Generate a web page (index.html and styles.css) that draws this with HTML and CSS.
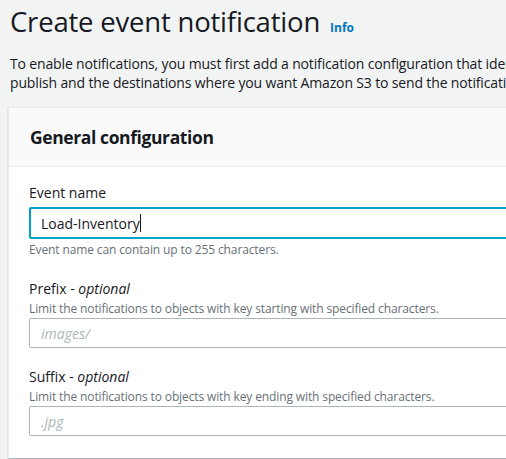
FILE: index.html
```html
<!DOCTYPE html>
<html>
<head>
<meta charset="utf-8">
<link rel="stylesheet" href="styles.css">
</head>
<body>
<div class="page">
  <div class="title-row">
    <h1 class="title">Create event notification</h1>
    <a class="info">Info</a>
  </div>
  <p class="intro">To enable notifications, you must first add a notification configuration that identifies the events you want Amazon S3 to publish and the destinations where you want Amazon S3 to send the notifications.</p>
  <div class="card">
    <div class="card-header">
      <h2 class="card-title">General configuration</h2>
    </div>
    <div class="card-body">
      <div class="field">
        <label class="label">Event name</label>
        <div class="input focused"><span class="value">Load-Inventory</span><span class="caret"></span></div>
        <div class="constraint">Event name can contain up to 255 characters.</div>
      </div>
      <div class="field">
        <label class="label">Prefix - <i>optional</i></label>
        <div class="desc">Limit the notifications to objects with key starting with specified characters.</div>
        <div class="input"><span class="placeholder">images/</span></div>
      </div>
      <div class="field">
        <label class="label">Suffix - <i>optional</i></label>
        <div class="desc">Limit the notifications to objects with key ending with specified characters.</div>
        <div class="input"><span class="placeholder">.jpg</span></div>
      </div>
    </div>
  </div>
</div>
</body>
</html>
```
FILE: styles.css
```css
html, body {
  margin: 0;
  padding: 0;
  background: #f2f3f3;
  overflow: hidden;
}
body {
  font-family: "Open Sans", "Noto Sans", sans-serif;
  color: #16191f;
  width: 506px;
  height: 459px;
}
.page {
  width: 900px;
  padding-left: 10px;
}
.title-row {
  display: flex;
  align-items: baseline;
  gap: 10px;
  padding-top: 2px;
}
.title {
  margin: 0;
  font-size: 27.5px;
  letter-spacing: -0.2px;
  font-weight: 400;
  line-height: 40px;
}
.info {
  font-size: 12px;
  font-weight: 700;
  color: #0073bb;
}
.intro {
  margin: 12px 0 0;
  font-size: 14px;
  letter-spacing: -0.15px;
  line-height: 19px;
  width: 790px;
}
.card {
  margin: 15px 0 0 -2px;
  background: #fff;
  border-top: 1px solid #eaeded;
  border-left: 1px solid #eaeded;
  border-bottom: 1px solid #aab7b8;
  box-shadow: 0 1px 1px 0 rgba(0,28,36,0.3);
}
.card-header {
  background: #fafafa;
  border-bottom: 1px solid #eaeded;
  padding: 17px 20px 17px 21px;
}
.card-title {
  margin: 0;
  font-size: 17.5px;
  letter-spacing: -0.4px;
  font-weight: 700;
  line-height: 24px;
}
.card-body {
  padding: 16px 20px 22px;
}
.field + .field {
  margin-top: 22px;
}
.field + .field + .field {
  margin-top: 19px;
}
.label {
  display: block;
  font-size: 14px;
  line-height: 20px;
  margin-bottom: 4px;
}
.label + .desc {
  margin-top: -2px;
}
.desc, .constraint {
  font-size: 12px;
  letter-spacing: -0.12px;
  line-height: 15px;
  color: #687078;
}
.desc + .input {
  margin-top: 2px;
}
.constraint {
  margin-top: 4px;
  line-height: 14px;
}
.input {
  height: 30px;
  box-sizing: border-box;
  border: 1px solid #aab7b8;
  border-radius: 2px;
  background: #fff;
  display: flex;
  align-items: center;
  padding: 0 11px;
  font-size: 14px;
}
.input.focused {
  height: 32px;
  border: 2px solid #00a1c9;
  padding: 0 10px;
}
.placeholder {
  color: #aab7b8;
  font-style: italic;
}
.caret {
  display: inline-block;
  width: 1px;
  height: 18px;
  background: #16191f;
}
```
